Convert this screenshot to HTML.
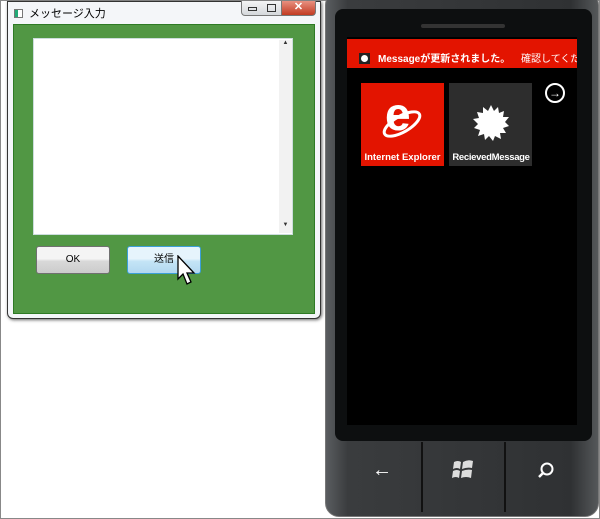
<!DOCTYPE html><html><head><meta charset="utf-8"><style>
*{margin:0;padding:0;box-sizing:border-box}
body{width:600px;height:519px;background:#fff;position:relative;overflow:hidden;font-family:"Liberation Sans","Noto Sans CJK JP",sans-serif;border:1px solid #888}
.a{position:absolute}
</style></head><body>
<div class="a" style="left:6px;top:0;width:314px;height:318px;background:#f4f6f9;border:1px solid #333;border-radius:0 0 6px 6px;box-shadow:1px 1px 3px #666"></div>
<div class="a" style="left:13px;top:8px;width:9px;height:9px;border:1px solid #777;background:linear-gradient(90deg,#2a7 0 40%,#fff 40%)"></div>
<div class="a" style="left:28px;top:4px;font-size:11px;color:#000">メッセージ入力</div>
<div class="a" style="left:240px;top:0;width:52px;height:15px;background:linear-gradient(#f4f4f4,#d5d8dc);border:1px solid #777;border-top:none;border-radius:0 0 0 4px"></div>
<div class="a" style="left:247px;top:6px;width:9px;height:4px;border:1px solid #333"></div>
<div class="a" style="left:266px;top:3px;width:9px;height:8px;border:1px solid #333"></div>
<div class="a" style="left:280px;top:0;width:35px;height:15px;background:linear-gradient(#e89080,#c23b22);border:1px solid #777;border-top:none;border-radius:0 0 4px 0;color:#fff;font-size:11px;font-weight:bold;text-align:center;line-height:13px">✕</div>
<div class="a" style="left:12px;top:23px;width:302px;height:290px;background:#519744;border:1px solid #2e7a25"></div>
<div class="a" style="left:32px;top:37px;width:260px;height:197px;background:#fff;border:1px solid #cdd"></div>
<div class="a" style="left:278px;top:39px;width:13px;height:193px;background:#f2f2f2;font-size:6px;color:#333;text-align:center">▲<div style="margin-top:176px">▼</div></div>
<div class="a" style="left:35px;top:245px;width:74px;height:28px;background:linear-gradient(#f4f4f4 45%,#d8d8d8 55%,#ccc);border:1px solid #707070;border-radius:3px;font-size:10px;text-align:center;line-height:26px">OK</div>
<div class="a" style="left:126px;top:245px;width:74px;height:28px;background:linear-gradient(#e6f4fc 45%,#c4e4f6 55%,#b2d8f0);border:1px solid #3c9fd8;border-radius:3px;font-size:10px;text-align:center;line-height:26px">送信</div>
<svg class="a" style="left:176px;top:254px" width="22" height="32" viewBox="0 0 22 32"><path d="M1 1 L1 24 L6 19 L10 29 L14 27 L10 18 L17 18 Z" fill="#fff" stroke="#000" stroke-width="1.3"/></svg>
<div class="a" style="left:324px;top:-10px;width:274px;height:526px;background:linear-gradient(90deg,#5a5d60,#3a3c3e 8%,#2f3133 90%,#55585a);border-radius:14px;border:1px solid #777"></div>
<div class="a" style="left:334px;top:8px;width:257px;height:432px;background:#0d0f10;border-radius:8px"></div>
<div class="a" style="left:420px;top:23px;width:84px;height:4px;background:#333;border-radius:2px"></div>
<div class="a" style="left:346px;top:36px;width:230px;height:388px;background:#000"></div>
<div class="a" style="left:346px;top:38px;width:230px;height:29px;background:#e31400;overflow:hidden;white-space:nowrap;color:#fff;font-size:10px;font-weight:bold;line-height:13px;padding-top:14px;padding-left:12px"><span style="display:inline-block;width:11px;height:11px;background:#222;vertical-align:-2px;position:relative;margin-right:8px"><span style="position:absolute;left:2px;top:2px;width:7px;height:7px;background:#fff;border-radius:50%"></span></span>Messageが更新されました。 <span style="font-weight:normal;margin-left:8px">確認してください</span></div>
<div class="a" style="left:360px;top:82px;width:83px;height:83px;background:#e31400"></div>
<div class="a" style="left:384px;top:88px;font:bold 46px 'Liberation Sans',sans-serif;color:#fff;line-height:50px">e</div>
<svg class="a" style="left:378px;top:103px" width="46" height="40"><ellipse cx="23" cy="20" rx="20" ry="8" transform="rotate(-30 23 20)" fill="none" stroke="#fff" stroke-width="3"/></svg>
<div class="a" style="left:360px;top:151px;width:83px;font-size:9.5px;font-weight:bold;color:#fff;text-align:center">Internet Explorer</div>
<div class="a" style="left:448px;top:82px;width:83px;height:83px;background:#2d2d2d"></div>
<svg class="a" style="left:471px;top:103px" width="38" height="38" viewBox="-19 -19 38 38"><polygon fill="#fff" points="0,-18 3,-12 7,-16 8,-10 13,-12 12,-6 18,-6 14,-1 18,3 12,5 15,10 9,10 10,16 4,13 2,18 -2,13 -6,17 -7,11 -13,13 -11,7 -17,5 -13,1 -18,-4 -12,-5 -14,-11 -8,-10 -8,-16 -3,-12"/></svg>
<div class="a" style="left:448px;top:151px;width:84px;font-size:9.5px;font-weight:bold;color:#fff;text-align:center;white-space:nowrap;letter-spacing:-0.3px">RecievedMessage</div>
<div class="a" style="left:544px;top:82px;width:20px;height:20px;border:2px solid #fff;border-radius:50%;color:#fff;font-size:12px;font-weight:bold;text-align:center;line-height:16px">→</div>
<div class="a" style="left:420px;top:441px;width:2px;height:70px;background:#111"></div>
<div class="a" style="left:503px;top:441px;width:2px;height:70px;background:#111"></div>
<div class="a" style="left:371px;top:458px;color:#fff;font-size:20px">←</div>
<svg class="a" style="left:450px;top:458px" width="24" height="22" viewBox="0 0 24 22"><path d="M3 3 Q7 1 10 3 L9 10 Q6 8 2 10Z M12 3 Q17 0 22 2 L21 9 Q16 8 11 10Z M2 12 Q6 10 9 12 L8 19 Q5 17 1 19Z M11 12 Q16 10 21 11 L20 19 Q15 17 10 19Z" fill="#ddd"/></svg>
<svg class="a" style="left:536px;top:460px" width="18" height="18"><circle cx="10" cy="8" r="5.5" fill="none" stroke="#fff" stroke-width="2"/><line x1="6" y1="12" x2="2" y2="16" stroke="#fff" stroke-width="2.5"/></svg>
</body></html>
